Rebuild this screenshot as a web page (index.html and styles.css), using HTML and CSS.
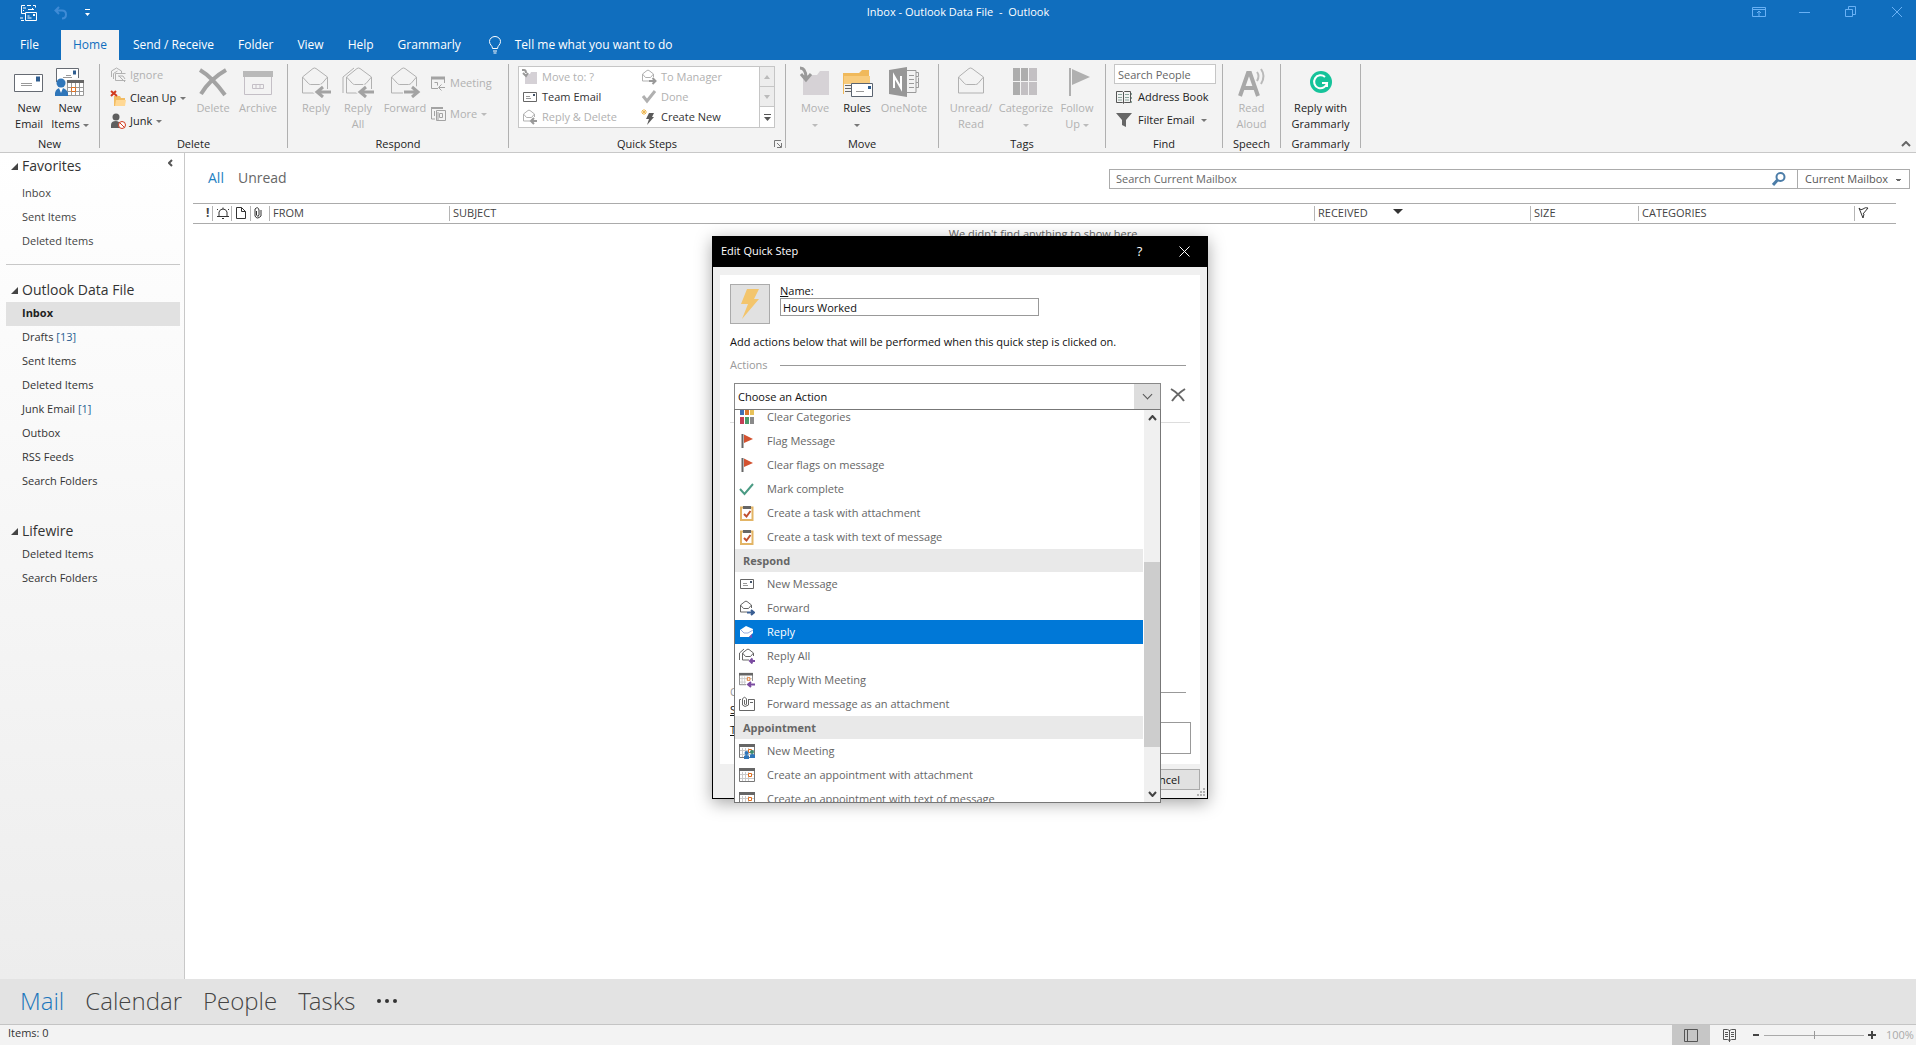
FILE: index.html
```html
<!DOCTYPE html>
<html lang="en">
<head>
<meta charset="utf-8">
<title>Inbox - Outlook Data File - Outlook</title>
<link rel="stylesheet" href="styles.css">
</head>
<body>
<svg class="defs" aria-hidden="true">
  <symbol id="open-big" viewBox="0 0 30 32"><path d="M1.500 27V11L12 2.500q1.500-1 3 0L26.500 11V27zM1.500 11l6 6.500q1 1 2 1h9q1.500 0 2.500-1l5.500-6.500" fill="none" stroke="currentColor"/></symbol>
  <symbol id="open-small" viewBox="0 0 16 16"><path d="M1.500 12V5L6 1.500q1-.7 2 0L12.500 5v3M1.500 12H8M1.500 5l3 3.500h5L12.500 5" fill="none" stroke="currentColor"/></symbol>
  <symbol id="cal-small" viewBox="0 0 16 16"><path d="M.5 3v11.500h15V3" fill="#fff" stroke="#777"/><path d="M0 1h16v3H0z" fill="#666"/><path d="M3.500 5v9M6.500 5v9M9.500 5v9M1 7.500h14M1 11.500h14" fill="none" stroke="#c9c9c9"/><path d="M9.500 6.500h3v3h-3z" fill="#fff" stroke="#e07020"/></symbol>
  <symbol id="flag-small" viewBox="0 0 16 16"><path d="M3.500 1v14" stroke="#666" stroke-width="2"/><path d="M5 1.500L14 6 5 10z" fill="#d35230"/></symbol>
  <symbol id="task-small" viewBox="0 0 16 16"><path d="M2 2.500h11.500v12.500H2z" fill="#fff" stroke="#e3b566" stroke-width="2"/><path d="M4 1h8v3H4z" fill="#666"/><path d="M5 9l2.500 2.500L11.500 6" fill="none" stroke="#c0502f" stroke-width="2"/></symbol>
  <symbol id="mail-small" viewBox="0 0 16 16"><path d="M1.500 3.500h13v9h-13z" fill="#fff" stroke="#666"/><path d="M4 7.500h4M4 9.500h5" stroke="#999"/><path d="M11 5h2v2h-2z" fill="#44546a"/></symbol>
</svg>

<header class="titlebar">
  <div class="quick-access">
    <button aria-label="Send and receive all"><svg width="18" height="18" viewBox="0 0 18 18" fill="none" stroke="#fff"><path d="M5 1.500H1.500v8H5M7 1.500h4m2 0h2.500v2M3 4h3M3 6.500h1M0 14h3M1 16.500h3M5.500 8.500h11v8h-11zM7.500 14h4M7.500 12h2M12.500 4v2M8 5.500h6"/><path d="M13 10h2v2h-2z" fill="#fff" stroke="none"/></svg></button>
    <button aria-label="Undo"><svg width="14" height="14" viewBox="0 0 14 14" fill="none" stroke="#3f8bd6" stroke-width="2"><path d="M5 1L1.500 4.500 5 8M2 4.500h6q4 0 4 4t-4 4"/></svg></button>
    <button aria-label="Customize Quick Access Toolbar"><svg width="7" height="8" viewBox="0 0 7 8" fill="#fff"><path d="M1 0h5v1H1zM1 4h5L3.500 7z"/></svg></button>
  </div>
  <h1 class="window-title">Inbox - Outlook Data File &nbsp;- &nbsp;Outlook</h1>
  <div class="window-buttons">
    <button aria-label="Ribbon display options"><svg width="14" height="12" viewBox="0 0 14 12" fill="none" stroke="#69b1f5"><path d="M.5 1.500h13v9H.5zM.5 3.500h13M7 10V5M5 7l2-2 2 2"/></svg></button>
    <button aria-label="Minimize"><svg width="12" height="12" viewBox="0 0 12 12" stroke="#69b1f5"><path d="M0 6.500h11"/></svg></button>
    <button aria-label="Restore"><svg width="12" height="12" viewBox="0 0 12 12" fill="none" stroke="#69b1f5"><path d="M.5 3.500h7v7h-7zM3.500 3V.5h7v8H8"/></svg></button>
    <button aria-label="Close"><svg width="12" height="12" viewBox="0 0 12 12" stroke="#69b1f5"><path d="M1 1l10 10M11 1L1 11"/></svg></button>
  </div>
</header>

<nav class="tabs">
  <button class="tab file">File</button>
  <button class="tab active">Home</button>
  <button class="tab">Send / Receive</button>
  <button class="tab">Folder</button>
  <button class="tab">View</button>
  <button class="tab">Help</button>
  <button class="tab">Grammarly</button>
  <button class="tab tell"><svg width="12" height="18" viewBox="0 0 12 18" fill="none" stroke="#fff"><path d="M3.500 12.500c0-3-3-3.500-3-7a5.500 5 0 0 1 11 0c0 3.500-3 4-3 7zM4 15h4M4.500 17h3"/></svg>Tell me what you want to do</button>
</nav>

<section class="ribbon" aria-label="Home ribbon">
  <div class="group g-new">
    <div class="tools">
      <button class="big"><svg viewBox="0 0 32 32"><path d="M1.500 8.500h28v17h-28z" fill="#fff" stroke="#666b73"/><path d="M8 17.500h11M8 19.500h11" stroke="#999"/><path d="M23 10.500h4v5h-4z" fill="#2f5d8f"/></svg><span>New<br>Email</span></button>
      <button class="big"><svg viewBox="0 0 32 32"><path d="M2.500 16V2.500h22V12" fill="#fff" stroke="#666b73"/><path d="M9 11.500h9M12 9.500h5" stroke="#999"/><path d="M19 4.500h3v4h-3z" fill="#2f5d8f"/><path d="M13.500 15v14.500h16V15M13.500 21.500h16M13.500 25.500h16M17.500 17v12M21.500 17v12M25.500 17v12" fill="#fff" stroke="#999"/><path d="M13 14h17v3H13z" fill="#666"/><path d="M17.500 21.500h4v4h-4z" fill="none" stroke="#e07020"/><circle cx="7" cy="17" r="4.500" fill="#2f76ba"/><path d="M1 30v-3q1-5 6-5t7 5v3z" fill="#2f76ba"/><path d="M5 22l2 5 2-5z" fill="#fff"/></svg><span>New<br>Items <i class="caret"></i></span></button>
    </div>
    <h2>New</h2>
  </div>
  <div class="group g-delete">
    <div class="tools">
      <div class="stack">
        <button class="small" disabled><svg viewBox="0 0 16 16" fill="none" stroke="currentColor"><path d="M1.500 10V4l5-3 5 3v2M3.500 12V6.500l4-2.500M5.500 6.500h10M5.500 6.500v7h10M8 9h5l2 3M9 9l6 6"/></svg>Ignore</button>
        <button class="small"><svg viewBox="0 0 16 16"><path d="M4 6h6l1 2h4v8H4z" fill="#f2bc62"/><path d="M6 10h10l-1 6H5z" fill="#ffd894"/><path d="M1 1l6 5M6 1L1 6" stroke="#d13a1e" stroke-width="2"/></svg>Clean Up <i class="caret"></i></button>
        <button class="small"><svg viewBox="0 0 16 16"><circle cx="6" cy="4" r="3.500" fill="#5f5f5f"/><path d="M1 15V12q0-4 5-4t4 7z" fill="#5f5f5f"/><circle cx="12" cy="12" r="3.500" fill="#fff" stroke="#d13a1e"/><path d="M9.500 9.500l5 5" stroke="#d13a1e"/></svg>Junk <i class="caret"></i></button>
      </div>
      <button class="big" disabled><svg viewBox="0 0 32 32"><path d="M3 4q12 7 25 25M29 4Q13 13 4 28" fill="none" stroke="#a3a3a3" stroke-width="4"/></svg><span>Delete</span></button>
      <button class="big" disabled><svg viewBox="0 0 32 32"><path d="M1 5h30v6H1z" fill="#b9b9b9"/><path d="M2.500 11v17.500h27V11M10.500 18.500h11v4h-11zM14 18v4M18 18v4" fill="none" stroke="#c4bfc6"/></svg><span>Archive</span></button>
    </div>
    <h2>Delete</h2>
  </div>
  <div class="group g-respond">
    <div class="tools">
      <button class="big" disabled><svg viewBox="0 0 32 32"><use href="#open-big" x="1" width="30" height="32"/><path d="M31 26H17M23 20l-6 6 6 6" fill="none" stroke="#f3f3f3" stroke-width="6"/><path d="M31 26H18M23 21l-6 5 6 5" fill="none" stroke="#a3a3a3" stroke-width="3"/></svg><span>Reply</span></button>
      <button class="big" disabled><svg viewBox="0 0 32 32"><path d="M1 27V11L12 2" fill="none" stroke="currentColor"/><use href="#open-big" x="3" width="30" height="32"/><path d="M31 26H19M24 20l-6 6 6 6" fill="none" stroke="#f3f3f3" stroke-width="6"/><path d="M32 26H19M24 21l-6 5 6 5" fill="none" stroke="#a3a3a3" stroke-width="3"/></svg><span>Reply<br>All</span></button>
      <button class="big" disabled><svg viewBox="0 0 32 32"><use href="#open-big" x="1" width="30" height="32"/><path d="M14 26H28M23 20l6 6-6 6" fill="none" stroke="#f3f3f3" stroke-width="6"/><path d="M15 26H28M23 21l6 5-6 5" fill="none" stroke="#a3a3a3" stroke-width="3"/></svg><span>Forward</span></button>
      <div class="stack wide-gap">
        <button class="small" disabled><svg viewBox="0 0 16 16" fill="none" stroke="#a3a3a3"><path d="M1 3h14" stroke-width="3"/><path d="M1.500 3v10.500H8M14.500 3v5M4.500 7.500h3v3M15 12.500H9M11.500 9.500l-3 3 3 3"/></svg>Meeting</button>
        <button class="small" disabled><svg viewBox="0 0 16 16" fill="none" stroke="#a3a3a3"><path d="M1 2h12" stroke-width="2"/><path d="M1.500 2v11H5M4.500 5v5M6.500 4.500h9v10h-9zM9.500 7.500h3v4h-3zM8 6v8"/></svg>More <i class="caret"></i></button>
      </div>
    </div>
    <h2>Respond</h2>
  </div>
  <div class="group g-quick">
    <div class="tools">
      <div class="gallery">
        <div class="steps">
          <button class="small" disabled><svg viewBox="0 0 16 16"><path d="M3 5h5l1-2h6v12H3z" fill="#d5d1d6"/><path d="M0 1h2q2 0 2 3M1 4l3 3 2-3" fill="none" stroke="#999" stroke-width="2"/></svg>Move to: ?</button>
          <button class="small" disabled><svg viewBox="0 0 16 16"><use href="#open-small" width="16" height="16"/><path d="M8 12h6M11.500 9l3 3-3 3" fill="none" stroke="#999" stroke-width="2"/></svg>To Manager</button>
          <button class="small dark"><svg viewBox="0 0 16 16"><use href="#mail-small" width="16" height="16"/></svg>Team Email</button>
          <button class="small" disabled><svg viewBox="0 0 16 16"><path d="M2 7l4 5 8-10" fill="none" stroke="#b0b0b0" stroke-width="3"/></svg>Done</button>
          <button class="small" disabled><svg viewBox="0 0 16 16"><use href="#open-small" width="16" height="16"/><path d="M15 12H9M12 9l-3 3 3 3" fill="none" stroke="#999" stroke-width="2"/></svg>Reply &amp; Delete</button>
          <button class="small dark"><svg viewBox="0 0 16 16"><path d="M8 4h5l-2 4h2l-7 8 2-6H5z" fill="#5a5a5a"/><path d="M3 0v6M0 3h6M1 1l4 4M5 1L1 5" stroke="#edb64f"/></svg>Create New</button>
        </div>
        <div class="spinner">
          <button aria-label="Scroll up" disabled><svg width="6" height="4" viewBox="0 0 6 4"><path d="M0 4h6L3 0z" fill="#bbb"/></svg></button>
          <button aria-label="Scroll down" disabled><svg width="6" height="4" viewBox="0 0 6 4"><path d="M0 0h6L3 4z" fill="#bbb"/></svg></button>
          <button aria-label="More quick steps"><svg width="7" height="7" viewBox="0 0 7 7" fill="#555"><path d="M0 0h7v1H0zM0 3h7L3.500 7z"/></svg></button>
        </div>
      </div>
    </div>
    <h2>Quick Steps</h2>
    <button class="launcher" aria-label="Manage quick steps"><svg width="8" height="8" viewBox="0 0 8 8" fill="none" stroke="#777"><path d="M.5 7V.5H7M3 3l4 4M7.500 3v4.500H3"/></svg></button>
  </div>
  <div class="group g-move">
    <div class="tools">
      <button class="big" disabled><svg viewBox="0 0 32 32"><path d="M4 9h14l3-4h9v24H4z" fill="#d6d2d6"/><path d="M1 2q6 0 6 10M2 8l5 6 5-6" fill="none" stroke="#999" stroke-width="3"/></svg><span>Move<br><i class="caret"></i></span></button>
      <button class="big"><svg viewBox="0 0 32 32"><path d="M2 7h16l3-3h7v24H2z" fill="#f0b95b"/><path d="M3 10h26v10H3z" fill="#f8cb7c"/><path d="M3 18h7v11H3z" fill="#f3f3f3"/><path d="M4 19.500h6M4 22.500h6M4 25.500h6" stroke="#666"/><path d="M10.500 17.500h21v13h-21z" fill="#fff" stroke="#5b6470"/><path d="M15 25.500h8" stroke="#999"/><path d="M27 20h3v3h-3z" fill="#2f5d8f"/></svg><span>Rules<br><i class="caret"></i></span></button>
      <button class="big" disabled><svg viewBox="0 0 32 32"><path d="M19 4.500h9v22h-9M21 9.500h5M21 13.500h5M21 17.500h5M21 21.500h5M28 6.500h2.500v4H28m2.500 1v5H28m2.500 0v5H28" fill="none" stroke="#9a9a9a"/><path d="M1 4l18-3v30L1 28z" fill="#979797"/><path d="M6 22V10l7 12V10" fill="none" stroke="#fff" stroke-width="2"/></svg><span>OneNote</span></button>
    </div>
    <h2>Move</h2>
  </div>
  <div class="group g-tags">
    <div class="tools">
      <button class="big" disabled><svg viewBox="0 0 32 32"><use href="#open-big" x="2" width="30" height="32"/></svg><span>Unread/<br>Read</span></button>
      <button class="big" disabled><svg viewBox="0 0 32 32"><path d="M3 2h7v13H3zM11 2h7v13h-7zM3 16h7v13H3z" fill="#adadad"/><path d="M19 2h8v13h-8zM11 16h7v13h-7zM19 16h8v13h-8z" fill="#c3c0c3"/></svg><span>Categorize<br><i class="caret"></i></span></button>
      <button class="big" disabled><svg viewBox="0 0 32 32"><path d="M8 2h2v28H8zM11 3l18 8-18 8z" fill="#b0b0b0"/></svg><span>Follow<br>Up <i class="caret"></i></span></button>
    </div>
    <h2>Tags</h2>
  </div>
  <div class="group g-find">
    <div class="tools">
      <div class="find-stack">
        <input type="text" placeholder="Search People" aria-label="Search People">
        <button class="small"><svg viewBox="0 0 16 16" fill="none" stroke="#555"><path d="M.5 2.500h6l1 1 1-1h6v11h-6l-1 1-1-1h-6zM7.500 3v11"/><path d="M2 5.500h4M2 8.500h4M2 11h4M9 5.500h4M9 8.500h4M9 11h4M15.500 4v2m0 2v2m0 2v2" stroke="#8aa59c"/></svg>Address Book</button>
        <button class="small"><svg viewBox="0 0 16 16"><path d="M0 1h16L10 8v7l-4-2V8z" fill="#666"/></svg>Filter Email <i class="caret"></i></button>
      </div>
    </div>
    <h2>Find</h2>
  </div>
  <div class="group g-speech">
    <div class="tools">
      <button class="big" disabled><svg viewBox="0 0 32 32" fill="none"><path d="M4 30l8-23h2l8 23M7 22h12" stroke="#a8a8a8" stroke-width="4"/><path d="M21 6q3 4 0 9M25 3q5 7 0 15" stroke="#b9b9b9" stroke-width="2"/></svg><span>Read<br>Aloud</span></button>
    </div>
    <h2>Speech</h2>
  </div>
  <div class="group g-grammarly">
    <div class="tools">
      <button class="big"><svg viewBox="0 0 32 32"><circle cx="16" cy="16" r="11" fill="#15c39a"/><path d="M20 11a6.500 6.500 0 1 0 2 6h-5M22 16v5" fill="none" stroke="#fff" stroke-width="2"/></svg><span>Reply with<br>Grammarly</span></button>
    </div>
    <h2>Grammarly</h2>
  </div>
  <button class="collapse" aria-label="Collapse the ribbon"><svg width="10" height="6" viewBox="0 0 10 6" fill="none" stroke="#666" stroke-width="2"><path d="M1 5l4-4 4 4"/></svg></button>
</section>

<div class="workspace">
  <aside class="folders">
    <button class="fold" aria-label="Minimize the folder pane"><svg width="5" height="8" viewBox="0 0 5 8" fill="none" stroke="#555" stroke-width="2"><path d="M4 1L1 4l3 3"/></svg></button>
    <section class="favorites">
      <h2>Favorites</h2>
      <ul><li><a href="#">Inbox</a></li><li><a href="#">Sent Items</a></li><li><a href="#">Deleted Items</a></li></ul>
    </section>
    <section class="datafile">
      <h2>Outlook Data File</h2>
      <ul>
        <li><a href="#" class="selected">Inbox</a></li>
        <li><a href="#">Drafts <b>[13]</b></a></li>
        <li><a href="#">Sent Items</a></li>
        <li><a href="#">Deleted Items</a></li>
        <li><a href="#">Junk Email <b>[1]</b></a></li>
        <li><a href="#">Outbox</a></li>
        <li><a href="#">RSS Feeds</a></li>
        <li><a href="#">Search Folders</a></li>
      </ul>
    </section>
    <section>
      <h2>Lifewire</h2>
      <ul><li><a href="#">Deleted Items</a></li><li><a href="#">Search Folders</a></li></ul>
    </section>
  </aside>
  <main class="messages">
    <div class="list-bar">
      <div class="filters"><a href="#" class="on">All</a><a href="#">Unread</a></div>
      <div class="search">
        <input type="text" placeholder="Search Current Mailbox" aria-label="Search Current Mailbox">
        <button aria-label="Search"><svg width="14" height="14" viewBox="0 0 14 14" fill="none" stroke="#4c7da8" stroke-width="2"><circle cx="8.500" cy="5" r="4"/><path d="M5.500 8L1 13" stroke-width="3"/></svg></button>
        <select aria-label="Search scope"><option>Current Mailbox</option></select>
      </div>
    </div>
    <table class="list">
      <colgroup><col class="c-imp"><col class="c-ico"><col class="c-ico"><col class="c-ico"><col class="c-from"><col><col class="c-received"><col class="c-size"><col class="c-cat"><col class="c-flag"></colgroup>
      <thead><tr>
        <th class="imp"><b>!</b></th>
        <th><svg width="14" height="12" viewBox="0 0 14 12" fill="none" stroke="#333"><path d="M3 9.500V5q1-3 4-3t4 3v4.500zM1 9.500h12M7 .5V2M6 11.500h2M1 2l1 1M13 2l-1 1"/></svg></th>
        <th><svg width="12" height="12" viewBox="0 0 12 12" fill="none" stroke="#333"><path d="M1.500.5h5l4 4v7h-9zM6.500.5v4h4"/></svg></th>
        <th><svg width="8" height="12" viewBox="0 0 8 12" fill="none" stroke="#333"><path d="M2.500 4v4q1.500 3 2.500 0V3Q4-1 1 2v7q2 4 6 0V3"/></svg></th>
        <th>FROM</th><th>SUBJECT</th>
        <th>RECEIVED<svg class="sort" width="10" height="5" viewBox="0 0 10 5"><path d="M0 0h10L5 5z" fill="#333"/></svg></th>
        <th>SIZE</th><th>CATEGORIES</th>
        <th><svg width="11" height="12" viewBox="0 0 11 12" fill="none" stroke="#333"><path d="M1 1l4 10 1-4M1 1q2 3 4 1t5-1L5 7"/></svg></th>
      </tr></thead>
      <tbody><tr><td colspan="10">We didn't find anything to show here.</td></tr></tbody>
    </table>
  </main>
</div>

<nav class="modules">
  <a href="#" class="on">Mail</a><a href="#">Calendar</a><a href="#">People</a><a href="#">Tasks</a>
  <button aria-label="More modules"><svg width="20" height="4" viewBox="0 0 20 4" fill="#333"><circle cx="2" cy="2" r="2"/><circle cx="10" cy="2" r="2"/><circle cx="18" cy="2" r="2"/></svg></button>
</nav>

<footer class="status">
  <span>Items: 0</span>
  <div class="views">
    <button class="on" aria-label="Normal view"><svg width="14" height="13" viewBox="0 0 14 13" fill="none" stroke="#555"><path d="M.5.5h13v12H.5zM3.500.5v12"/></svg></button>
    <button aria-label="Reading view"><svg width="13" height="13" viewBox="0 0 13 13" fill="none" stroke="#555"><path d="M.5.5h4l2 1 2-1h4v10h-4l-2 1-2-1h-4zM6.500 1v12M2 3.500h3M2 5.500h3M2 7.500h3M8 3.500h3M8 5.500h3M8 7.500h3"/></svg></button>
    <button class="step" aria-label="Zoom out"><svg width="8" height="8" viewBox="0 0 8 8"><path d="M1 3h6v2H1z" fill="#444"/></svg></button>
    <input type="range" aria-label="Zoom" min="0" max="200" value="100">
    <button class="step" aria-label="Zoom in"><svg width="8" height="8" viewBox="0 0 8 8"><path d="M0 3h8v2H0zM3 0h2v8H3z" fill="#444"/></svg></button>
    <span class="zoom">100%</span>
  </div>
</footer>

<div class="dialog" role="dialog" aria-labelledby="dlg-title">
  <div class="dlg-bar">
    <h2 id="dlg-title">Edit Quick Step</h2>
    <button aria-label="Help">?</button>
    <button aria-label="Close"><svg width="11" height="11" viewBox="0 0 11 11" stroke="#fff"><path d="M.5.5l10 10M10.500.5l-10 10"/></svg></button>
  </div>
  <div class="dlg-panel">
    <div class="name-row">
      <button class="step-icon" aria-label="Change icon"><svg width="22" height="32" viewBox="0 0 22 32"><path d="M8 1h12l-5 10h5L3 31l6-15H2z" fill="#f3c56c"/></svg></button>
      <div class="name-field"><label for="step-name"><u>N</u>ame:</label><input id="step-name" type="text" value="Hours Worked"></div>
    </div>
    <p class="hint">Add actions below that will be performed when this quick step is clicked on.</p>
    <div class="section-title"><span>Actions</span></div>
    <div class="action-row">
      <div class="combo">
        <select aria-label="Action"><option>Choose an Action</option></select>
        <div class="dropdown">
          <ul role="listbox" aria-label="Actions">
            <li role="option"><svg viewBox="0 0 16 16"><path d="M1 0h4v6H1z" fill="#3f6fb5"/><path d="M6 0h4v6H6z" fill="#d9782d"/><path d="M11 0h4v6h-4z" fill="#e8c25a"/><path d="M1 8h4v7H1z" fill="#c43e55"/><path d="M6 8h4v7H6z" fill="#4a9b6c"/><path d="M11 8h4v7h-4z" fill="#8a8a8a"/></svg>Clear Categories</li>
            <li role="option"><svg><use href="#flag-small"/></svg>Flag Message</li>
            <li role="option"><svg><use href="#flag-small"/></svg>Clear flags on message</li>
            <li role="option"><svg viewBox="0 0 16 16"><path d="M1 8l4.500 5L14 3" fill="none" stroke="#4b9b84" stroke-width="2"/></svg>Mark complete</li>
            <li role="option"><svg><use href="#task-small"/></svg>Create a task with attachment</li>
            <li role="option"><svg><use href="#task-small"/></svg>Create a task with text of message</li>
            <li class="head">Respond</li>
            <li role="option"><svg><use href="#mail-small"/></svg>New Message</li>
            <li role="option"><svg viewBox="0 0 16 16"><use href="#open-small" width="16" height="16"/><path d="M8 12.500h6M12 10l3 2.500-3 2.500" fill="none" stroke="#3b5f93" stroke-width="2"/></svg>Forward</li>
            <li role="option" class="current" aria-selected="true"><svg viewBox="0 0 16 16"><path d="M1 6l6-4 7 3v4l-4 4H1z" fill="#fff"/><path d="M2 6l3 3h4l5-3" fill="none" stroke="#9aaede"/><path d="M10 13l3-3v4z" fill="#7a4bb0"/></svg>Reply</li>
            <li role="option"><svg viewBox="0 0 16 16"><path d="M.5 12V5L5 1" fill="none" stroke="#666"/><use href="#open-small" x="2" width="16" height="16"/><path d="M16 13h-5M13.500 10.500L11 13l2.500 2.500" fill="none" stroke="#7a4ba0" stroke-width="2"/></svg>Reply All</li>
            <li role="option"><svg viewBox="0 0 16 16"><use href="#cal-small" width="14" height="14"/><path d="M7 9h9v7H7z" fill="#fff"/><path d="M16 12.500h-6M12 10l-3 2.500 3 2.500" fill="none" stroke="#7a4ba0" stroke-width="2"/></svg>Reply With Meeting</li>
            <li role="option"><svg viewBox="0 0 16 16" fill="none" stroke="#666"><path d="M2 3.500H.5v11h15v-11H10M11 6.500h3M5.500 4v4q1 2 2 0V3q-2-3.500-4 0v6q2 3 6 0V3"/></svg>Forward message as an attachment</li>
            <li class="head">Appointment</li>
            <li role="option"><svg viewBox="0 0 16 16"><use href="#cal-small" width="16" height="16"/><path d="M5 16v-3q2.500-2 5 0v3zM11 15v-3q2-2 5 0v3z" fill="#2f76ba"/><circle cx="7.500" cy="10" r="2" fill="#2f76ba"/><circle cx="13" cy="9" r="2" fill="#3a8a70"/></svg>New Meeting</li>
            <li role="option"><svg><use href="#cal-small"/></svg>Create an appointment with attachment</li>
            <li role="option"><svg><use href="#cal-small"/></svg>Create an appointment with text of message</li>
          </ul>
          <div class="scroll">
            <svg width="9" height="6" viewBox="0 0 9 6" fill="none" stroke="#444" stroke-width="2"><path d="M1 5l3.500-4L8 5"/></svg>
            <div class="track"><div class="thumb"></div></div>
            <svg width="9" height="6" viewBox="0 0 9 6" fill="none" stroke="#444" stroke-width="2"><path d="M1 1l3.500 4L8 1"/></svg>
          </div>
        </div>
      </div>
      <button class="remove" aria-label="Remove action"><svg width="16" height="14" viewBox="0 0 16 14" fill="none" stroke="#666" stroke-width="2"><path d="M1 1q7 4 13 12M15 1Q7 6 2 13"/></svg></button>
    </div>
    <div class="optional">
      <div class="section-title"><span>Optional</span></div>
      <div class="key-row"><label for="shortcut"><u>S</u>hortcut key:</label><select id="shortcut"></select></div>
      <div class="tip-row"><label for="tip"><u>T</u>ooltip text:</label><textarea id="tip"></textarea></div>
    </div>
  </div>
  <div class="dlg-foot"><button>Cancel</button></div>
  <svg class="grip" width="8" height="8" viewBox="0 0 8 8" fill="#b0b0b0"><path d="M6 0h2v2H6zM3 3h2v2H3zM6 3h2v2H6zM0 6h2v2H0zM3 6h2v2H3zM6 6h2v2H6z"/></svg>
</div>
</body>
</html>
```
FILE: styles.css
```css
* { box-sizing: border-box; }
html { height: 100%; }
body {
  margin: 0;
  min-height: 100%;
  display: flex;
  flex-direction: column;
  position: relative;
  background: #fff;
  color: #333;
  font: 11px/16px "Open Sans", "Noto Sans", sans-serif;
}
h1, h2, p, ul { margin: 0; padding: 0; font-size: 11px; font-weight: 400; }
ul { list-style: none; }
button, input, select, textarea { font: inherit; color: inherit; margin: 0; padding: 0; border: 0; border-radius: 0; background: none; }
select { appearance: none; }
a { color: inherit; text-decoration: none; }
svg { display: block; flex: none; }
.defs { position: absolute; width: 0; height: 0; }
.caret { display: inline-block; vertical-align: middle; border: 3px solid transparent; border-top-color: #777; border-bottom: 0; }
:disabled .caret { border-top-color: #bbb; }

/* Title bar */
.titlebar { display: grid; grid-template-columns: 1fr auto 1fr; align-items: center; height: 30px; padding-bottom: 6px; background: #106ebe; color: #fff; overflow: hidden; }
.quick-access { display: flex; align-items: center; gap: 16px; padding: 2px 0 0 20px; }
.window-buttons { display: flex; justify-content: flex-end; margin-right: -4px; }
.window-buttons button { width: 46px; display: flex; justify-content: center; }

/* Ribbon tabs */
.tabs { display: flex; height: 30px; background: #106ebe; color: #fff; }
.tab { padding: 0 12px; font-size: 12px; }
.tab.file { padding: 0 22px 0 20px; }
.tab.active { background: #f3f3f3; color: #106ebe; margin-right: 2px; }
.tab.tell { display: flex; align-items: center; gap: 14px; padding-left: 16px; }

/* Ribbon */
.ribbon { position: relative; display: flex; height: 93px; padding: 4px 0; background: #f3f3f3; border-bottom: 1px solid #c8c8c8; }
.group { position: relative; display: flex; flex-direction: column; flex: none; border-right: 1px solid #b0b0b0; color: #222; }
.group h2 { height: 12px; line-height: 16px; text-align: center; }
.tools { display: grid; flex: none; height: 72px; }
.g-new { width: 100px; }
.g-new .tools { grid-template-columns: 42px 40px; padding-left: 8px; }
.g-new h2 { color: #222; }
.g-delete { width: 188px; }
.g-delete .tools { grid-template-columns: 80px 46px 44px; padding-left: 10px; }
.g-respond { width: 221px; }
.g-respond .tools { grid-template-columns: 40px 44px 50px 1fr; padding-left: 8px; }
.g-quick { width: 277px; }
.g-quick .tools { padding: 2px 10px 8px 9px; }
.g-move { width: 153px; }
.g-move .tools { grid-template-columns: 42px 42px 52px; padding-left: 8px; }
.g-tags { width: 167px; }
.g-tags .tools { grid-template-columns: 52px 58px 44px; padding-left: 6px; }
.g-find { width: 117px; }
.g-find .tools { padding: 0 6px 0 8px; }
.g-find .small { gap: 6px; padding-left: 2px; }
.g-speech { width: 58px; }
.g-grammarly { width: 80px; }
.big { display: flex; flex-direction: column; align-items: center; gap: 2px; padding-top: 2px; white-space: nowrap; min-width: 0; }
.big svg { width: 32px; height: 32px; }
.big:disabled, .small:disabled { color: #b1b1b1; }
.stack { display: flex; flex-direction: column; gap: 3px; align-items: flex-start; padding-top: 1px; }
.stack.wide-gap { gap: 11px; padding-top: 9px; }
.small { display: flex; align-items: center; gap: 4px; height: 20px; white-space: nowrap; }
.small svg { width: 16px; height: 16px; }
.gallery { display: flex; border: 1px solid #c6c6c6; background: #fff; }
.steps { flex: 1; display: grid; grid-template-columns: 119px 1fr; grid-auto-rows: 20px; padding-left: 3px; }
.steps .dark { color: #333; }
.spinner { display: grid; grid-template-rows: 1fr 1fr 1fr; width: 15px; border-left: 1px solid #c6c6c6; }
.spinner button { display: flex; align-items: center; justify-content: center; }
.spinner button:disabled { background: #ededed; border-bottom: 1px solid #c6c6c6; }
.launcher { position: absolute; right: 3px; bottom: 0; }
.find-stack { display: flex; flex-direction: column; gap: 3px; }
.find-stack input { height: 20px; padding: 0 3px; border: 1px solid #c6c6c6; background: #fff; width: 100%; }
::placeholder { color: #666; opacity: 1; }
.collapse { position: absolute; right: 5px; bottom: 5px; }

/* Folder pane */
.workspace { flex: 1; display: flex; }
.folders { position: relative; width: 185px; padding: 1px 4px 0 6px; border-right: 1px solid #c8c8c8; background: linear-gradient(#fff, #ededed); }
.fold { position: absolute; right: 11px; top: 6px; }
.folders h2 { display: flex; align-items: center; gap: 4px; height: 24px; padding-left: 5px; font-size: 14px; }
.folders h2::before { content: ""; border-left: 7px solid transparent; border-bottom: 7px solid #444; }
.folders a { display: block; height: 24px; line-height: 22px; padding-left: 16px; }
.folders b { font-weight: 400; color: #2a5f92; }
.folders .selected { background: #e1e1e1; font-weight: 700; color: #222; }
.favorites { padding-bottom: 10px; margin-bottom: 13px; border-bottom: 1px solid #c8c8c8; }
.favorites ul { margin-top: 4px; }
.datafile { padding-bottom: 25px; }
.favorites a { color: #444; }

/* Message list */
.messages { flex: 1; min-width: 0; padding: 16px 6px 0 8px; }
.list-bar { display: flex; justify-content: space-between; }
.filters { display: flex; gap: 14px; padding-left: 15px; font-size: 14px; line-height: 18px; color: #666; }
.filters .on { color: #1e7fc2; }
.search { display: flex; flex: 0 1 801px; height: 20px; border: 1px solid #ababab; color: #555; }
.search input { flex: 1; padding: 0 6px; }
.search button { width: 36px; display: flex; align-items: center; justify-content: center; }
.search select { width: 112px; padding-left: 7px; border-left: 1px solid #ababab; background: linear-gradient(#666, #666) no-repeat right 8px center / 5px 1px, linear-gradient(#666, #666) no-repeat right 9px top 9px / 3px 2px; }
.list { width: calc(100% - 14px); margin-top: 14px; table-layout: fixed; border-collapse: collapse; color: #444; }
.list th { height: 20px; padding: 0 0 2px 4px; font-weight: 400; text-align: left; white-space: nowrap; border: solid #ababab; border-width: 1px 0; background: linear-gradient(#b5b5b5, #b5b5b5) no-repeat left center / 1px 15px; }
.list th.imp { background: none; padding-left: 13px; font-size: 12px; }
.list td { padding: 2px 0 0; text-align: center; color: #666; }
.c-imp { width: 19px; }
.c-ico { width: 19px; }
.c-from { width: 180px; }
.c-received { width: 216px; }
.c-size { width: 108px; }
.c-cat { width: 216px; }
.c-flag { width: 42px; }
.sort { display: inline-block; margin: 0 0 3px 25px; }

/* Module switcher and status bar */
.modules { display: flex; align-items: center; gap: 21px; height: 46px; padding: 0 20px 2px; background: #e3e3e3; border-bottom: 1px solid #c4c4c4; color: #444; font-family: "Open Sans Light", "Open Sans", "Noto Sans", sans-serif; font-size: 24px; font-weight: 300; line-height: 40px; }
.modules .on { color: #1a75bb; }
.status { display: flex; justify-content: space-between; height: 20px; padding-left: 8px; background: #f3f3f3; line-height: 16px; }
.views { display: flex; align-items: center; }
.views button { width: 38px; height: 20px; display: flex; align-items: center; justify-content: center; }
.views .on { background: #c6c6c6; }
.views .step { width: 16px; }
.views input { appearance: none; width: 100px; height: 20px; background: linear-gradient(#aaa, #aaa) no-repeat center / 100% 1px; }
.views input::-webkit-slider-thumb { appearance: none; width: 1px; height: 8px; background: #999; }
.zoom { width: 36px; padding-left: 6px; color: #aaa; }

/* Dialog window */
.dialog { position: absolute; left: 712px; top: 236px; width: 496px; height: 563px; display: flex; flex-direction: column; border: 1px solid #000; background: #f0f0f0; color: #111; box-shadow: 0 4px 16px rgba(0, 0, 0, .35); }
.dlg-bar { display: flex; align-items: center; height: 30px; padding: 0 0 2px 8px; background: #000; color: #fff; }
.dlg-bar h2 { flex: 1; }
.dlg-bar button { width: 45px; display: flex; justify-content: center; font-size: 13px; }
.dlg-panel { flex: 1; display: flex; flex-direction: column; margin: 8px 7px 0; padding: 9px 10px 10px; background: #fff; }
.name-row { display: flex; gap: 10px; }
.step-icon { width: 40px; height: 40px; display: flex; align-items: center; justify-content: center; border: 1px solid #ababab; background: #e1e1e1; }
.name-field { display: flex; flex-direction: column; width: 259px; }
.name-field label { line-height: 14px; }
.name-field input { height: 18px; padding: 0 2px; border: 1px solid #999; }
.hint { margin: 10px 0 7px; white-space: nowrap; }
.section-title { display: flex; align-items: center; gap: 12px; margin-right: 4px; color: #999; }
.section-title::after { content: ""; flex: 1; height: 1px; background: #999; }
.action-row { display: flex; gap: 9px; margin-top: 10px; padding: 0 0 12px 4px; border-bottom: 1px solid #ddd; }
.combo { position: relative; width: 427px; height: 27px; }
.combo select { width: 100%; height: 27px; padding: 0 3px; border: 1px solid #888; background: linear-gradient(#ddd, #ddd) no-repeat right / 26px 100%; }
.combo::after { content: ""; position: absolute; right: 10px; top: 8px; width: 6px; height: 6px; border: solid #555; border-width: 0 1px 1px 0; transform: rotate(45deg); }
.remove { width: 16px; padding-bottom: 4px; }
.dropdown { position: absolute; left: 0; top: 26px; width: 427px; height: 394px; display: flex; border: 1px solid #777; background: #fff; overflow: hidden; z-index: 2; }
.dropdown ul { flex: 1; color: #666; margin-top: -5px; }
.dropdown li { display: flex; align-items: center; gap: 12px; height: 24px; padding-left: 4px; white-space: nowrap; }
.dropdown li svg { width: 16px; height: 16px; }
.dropdown .head { height: 23px; margin-right: 1px; padding-left: 8px; background: #e9e9e9; font-weight: 700; }
.dropdown .current { background: #0078d7; color: #fff; margin-right: 1px; }
.scroll { display: flex; flex-direction: column; align-items: center; width: 16px; padding: 5px 0; background: #f0f0f0; }
.track { flex: 1; width: 100%; padding-top: 141px; }
.thumb { height: 185px; background: #cdcdcd; }
.optional { margin-top: auto; }
.key-row { display: flex; gap: 20px; padding: 2px 0 4px; }
.key-row select { width: 120px; height: 16px; border: 1px solid #999; }
.tip-row { display: flex; justify-content: space-between; margin-right: -1px; }
.tip-row textarea { width: 380px; height: 32px; border: 1px solid #999; resize: none; }
.dlg-foot { display: flex; justify-content: flex-end; padding: 5px 7px 8px; }
.dlg-foot button { width: 74px; height: 21px; border: 1px solid #ababab; background: #e1e1e1; }
.grip { position: absolute; right: 2px; bottom: 2px; }
```
